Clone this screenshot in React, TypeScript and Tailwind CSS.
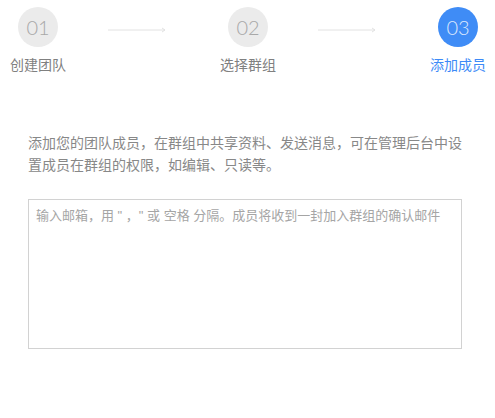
import React from 'react';

type Step = { num: string; label: string; active?: boolean };

const steps: Step[] = [
  { num: '01', label: '创建团队' },
  { num: '02', label: '选择群组' },
  { num: '03', label: '添加成员', active: true },
];

const cjk = { fontFamily: '"Liberation Sans", "Noto Sans CJK SC", sans-serif' };

const Arrow = () => (
  <div className="w-[58px] h-[46px] flex items-center">
    <svg width="58" height="6" viewBox="0 0 58 6">
      <line x1="0" y1="3" x2="57" y2="3" stroke="#e2e2e2" strokeWidth="1" />
      <path d="M54 1 L57 3 L54 5" fill="none" stroke="#e2e2e2" strokeWidth="1" />
    </svg>
  </div>
);

const StepItem = ({ step }: { step: Step }) => (
  <div className="w-[56px] flex flex-col items-center">
    <div
      className={`w-[40px] h-[40px] rounded-full flex items-center justify-center text-[20px] font-light ${
        step.active ? 'bg-[#3f8cf6] text-[#dce8fd]' : 'bg-[#ebebeb] text-[#a8a8a8]'
      }`}
      style={{ fontFamily: 'Lato, "Open Sans", sans-serif' }}
    >
      {step.num}
    </div>
    <div
      className={`mt-[8px] text-[14px] leading-[20px] whitespace-nowrap ${
        step.active ? 'text-[#3d8af7]' : 'text-[#808080]'
      }`}
      style={cjk}
    >
      {step.label}
    </div>
  </div>
);

export default function App() {
  return (
    <div className="w-[495px] h-[418px] bg-white" style={cjk}>
      {/* step indicator */}
      <div className="flex items-start pl-[10px] pt-[7px]">
        <StepItem step={steps[0]} />
        <div className="ml-[42px]"><Arrow /></div>
        <div className="ml-[54px]"><StepItem step={steps[1]} /></div>
        <div className="ml-[42px]"><Arrow /></div>
        <div className="ml-[54px]"><StepItem step={steps[2]} /></div>
      </div>

      {/* intro */}
      <p className="mx-[28px] mt-[57px] w-[436px] text-[14px] leading-[22px] text-[#888]">
        添加您的团队成员，在群组中共享资料、发送消息，可在管理后台中设置成员在群组的权限，如编辑、只读等。
      </p>

      {/* email input */}
      <textarea
        className="block ml-[28px] mt-[23px] w-[434px] h-[150px] border border-[#d2d2d2] px-[7px] py-[7px] text-[13px] leading-[18px] text-[#555] placeholder:text-[#a5a5a5] resize-none outline-none"
        style={cjk}
        placeholder={'输入邮箱，用 " ，" 或 空格 分隔。成员将收到一封加入群组的确认邮件'}
      />
    </div>
  );
}
